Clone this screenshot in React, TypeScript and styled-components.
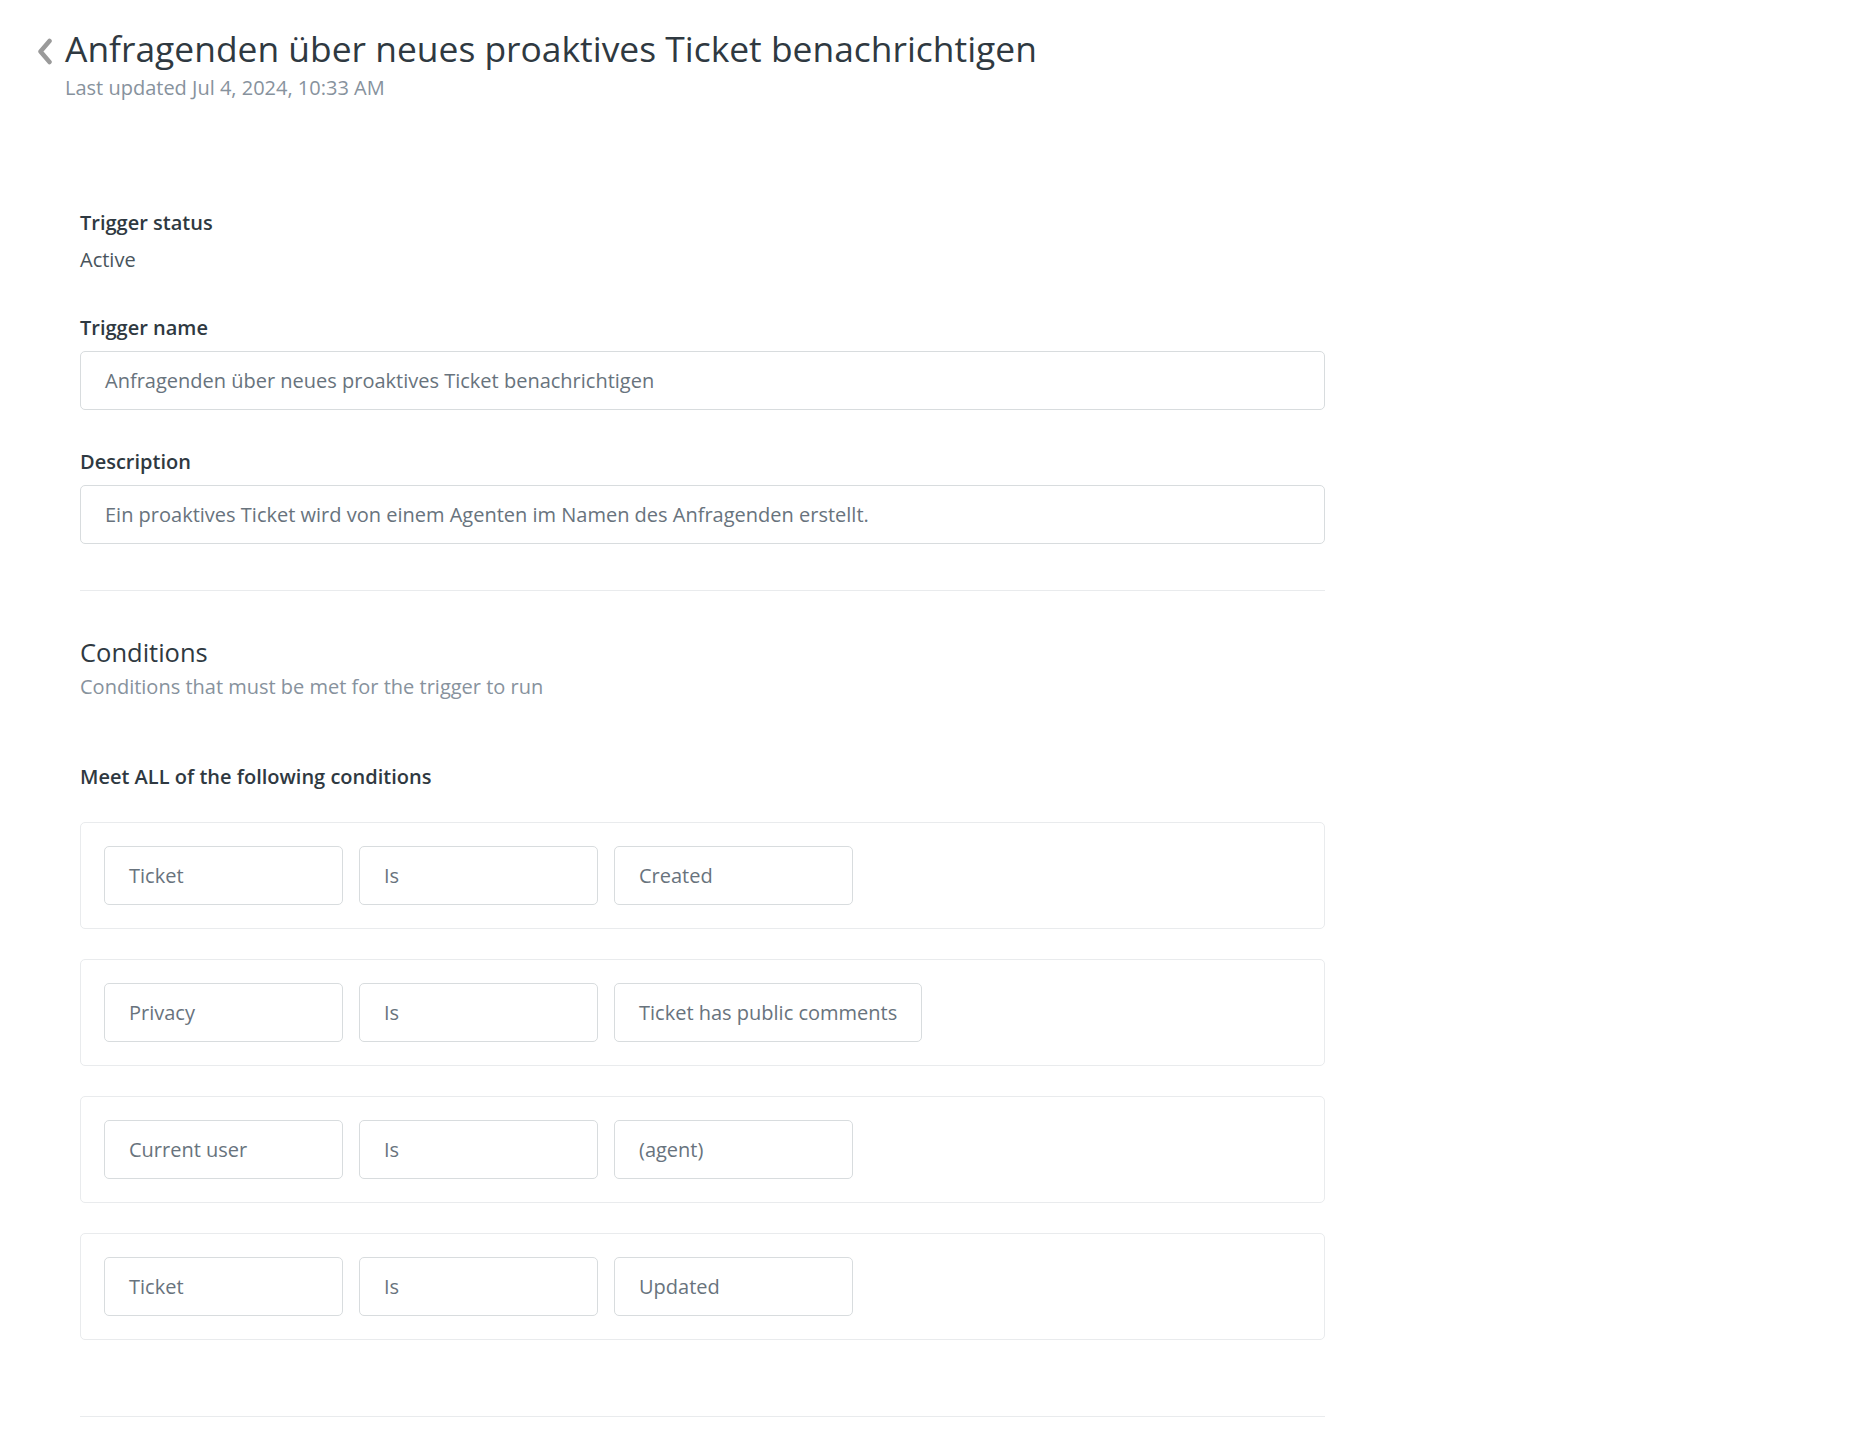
import { FC } from "react";
import styled, { createGlobalStyle } from "styled-components";

type Condition = {
  field: string;
  operator: string;
  value: string;
};

const conditions: Condition[] = [
  { field: "Ticket", operator: "Is", value: "Created" },
  { field: "Privacy", operator: "Is", value: "Ticket has public comments" },
  { field: "Current user", operator: "Is", value: "(agent)" },
  { field: "Ticket", operator: "Is", value: "Updated" },
];

const GlobalStyle = createGlobalStyle`
  body {
    margin: 0;
    background: #ffffff;
    font-family: "Open Sans", "Noto Sans", Arial, sans-serif;
    color: #2f3941;
  }
`;

const BackIcon: FC = () => (
  <svg width="17" height="27" viewBox="0 0 17 27" fill="none">
    <path
      d="M13.5 3 L4.5 13.5 L13.5 24"
      stroke="#9a9a9a"
      strokeWidth="4.5"
      strokeLinecap="round"
      strokeLinejoin="round"
    />
  </svg>
);

const App: FC = () => {
  return (
    <>
      <GlobalStyle />
      <Page>
        <Header>
          <BackButton aria-label="Back">
            <BackIcon />
          </BackButton>
          <HeaderText>
            <Title>Anfragenden über neues proaktives Ticket benachrichtigen</Title>
            <Updated>Last updated Jul 4, 2024, 10:33 AM</Updated>
          </HeaderText>
        </Header>

        <Form>
          <Field $top={0} $gap={13}>
            <Label>Trigger status</Label>
            <Value>Active</Value>
          </Field>

          <Field $top={44} $gap={11}>
            <Label>Trigger name</Label>
            <TextBox>Anfragenden über neues proaktives Ticket benachrichtigen</TextBox>
          </Field>

          <Field $top={40} $gap={11}>
            <Label>Description</Label>
            <TextBox>
              Ein proaktives Ticket wird von einem Agenten im Namen des Anfragenden erstellt.
            </TextBox>
          </Field>

          <Divider />

          <SectionTitle>Conditions</SectionTitle>
          <SectionHint>Conditions that must be met for the trigger to run</SectionHint>

          <GroupLabel>Meet ALL of the following conditions</GroupLabel>

          <ConditionList>
            {conditions.map((c, i) => (
              <ConditionCard key={i}>
                <Select>{c.field}</Select>
                <Select>{c.operator}</Select>
                <Select>{c.value}</Select>
              </ConditionCard>
            ))}
          </ConditionList>

          <Divider $bottom />
        </Form>
      </Page>
    </>
  );
};

export default App;

const Page = styled.div`
  padding: 28px 0 40px 36px;
`;

const Header = styled.div`
  display: flex;
  align-items: flex-start;
  gap: 12px;
`;

const BackButton = styled.button`
  display: flex;
  padding: 0;
  margin-top: 10px;
  border: none;
  background: none;
  cursor: pointer;
`;

const HeaderText = styled.div`
  display: flex;
  flex-direction: column;
`;

const Title = styled.h1`
  margin: 0;
  font-size: 35.4px;
  line-height: 40px;
  font-weight: 400;
  color: #2f3941;
`;

const Updated = styled.div`
  margin-top: 8px;
  font-size: 20px;
  line-height: 24px;
  color: #87929d;
`;

const Form = styled.div`
  width: 1245px;
  margin: 111px 0 0 44px;
  display: flex;
  flex-direction: column;
`;

const Field = styled.div<{ $top: number; $gap: number }>`
  display: flex;
  flex-direction: column;
  gap: ${(p) => p.$gap}px;
  margin-top: ${(p) => p.$top}px;
`;

const Label = styled.div`
  font-size: 20px;
  line-height: 24px;
  font-weight: 600;
  color: #2f3941;
`;

const Value = styled.div`
  font-size: 20px;
  line-height: 24px;
  color: #49545c;
`;

const TextBox = styled.div`
  box-sizing: border-box;
  height: 59px;
  padding: 0 24px;
  display: flex;
  align-items: center;
  border: 1px solid #d8dcde;
  border-radius: 5px;
  font-size: 20px;
  color: #68737d;
`;

const Divider = styled.hr<{ $bottom?: boolean }>`
  width: 100%;
  margin: ${(p) => (p.$bottom ? "76px 0 0" : "46px 0 0")};
  border: none;
  border-top: 1px solid #e9ebed;
`;

const SectionTitle = styled.h2`
  margin: 45px 0 0;
  font-size: 25.5px;
  line-height: 32px;
  font-weight: 400;
  color: #2f3941;
`;

const SectionHint = styled.div`
  margin-top: 7px;
  font-size: 20px;
  line-height: 24px;
  color: #87929d;
`;

const GroupLabel = styled.div`
  margin-top: 66px;
  font-size: 20px;
  line-height: 24px;
  font-weight: 600;
  color: #2f3941;
`;

const ConditionList = styled.div`
  margin-top: 33px;
  display: flex;
  flex-direction: column;
  gap: 30px;
`;

const ConditionCard = styled.div`
  display: flex;
  gap: 16px;
  padding: 23px;
  border: 1px solid #e9ebed;
  border-radius: 5px;
`;

const Select = styled.div`
  box-sizing: border-box;
  min-width: 239px;
  height: 59px;
  padding: 0 24px;
  display: flex;
  align-items: center;
  border: 1px solid #d8dcde;
  border-radius: 5px;
  font-size: 20px;
  color: #68737d;
  white-space: nowrap;
`;
